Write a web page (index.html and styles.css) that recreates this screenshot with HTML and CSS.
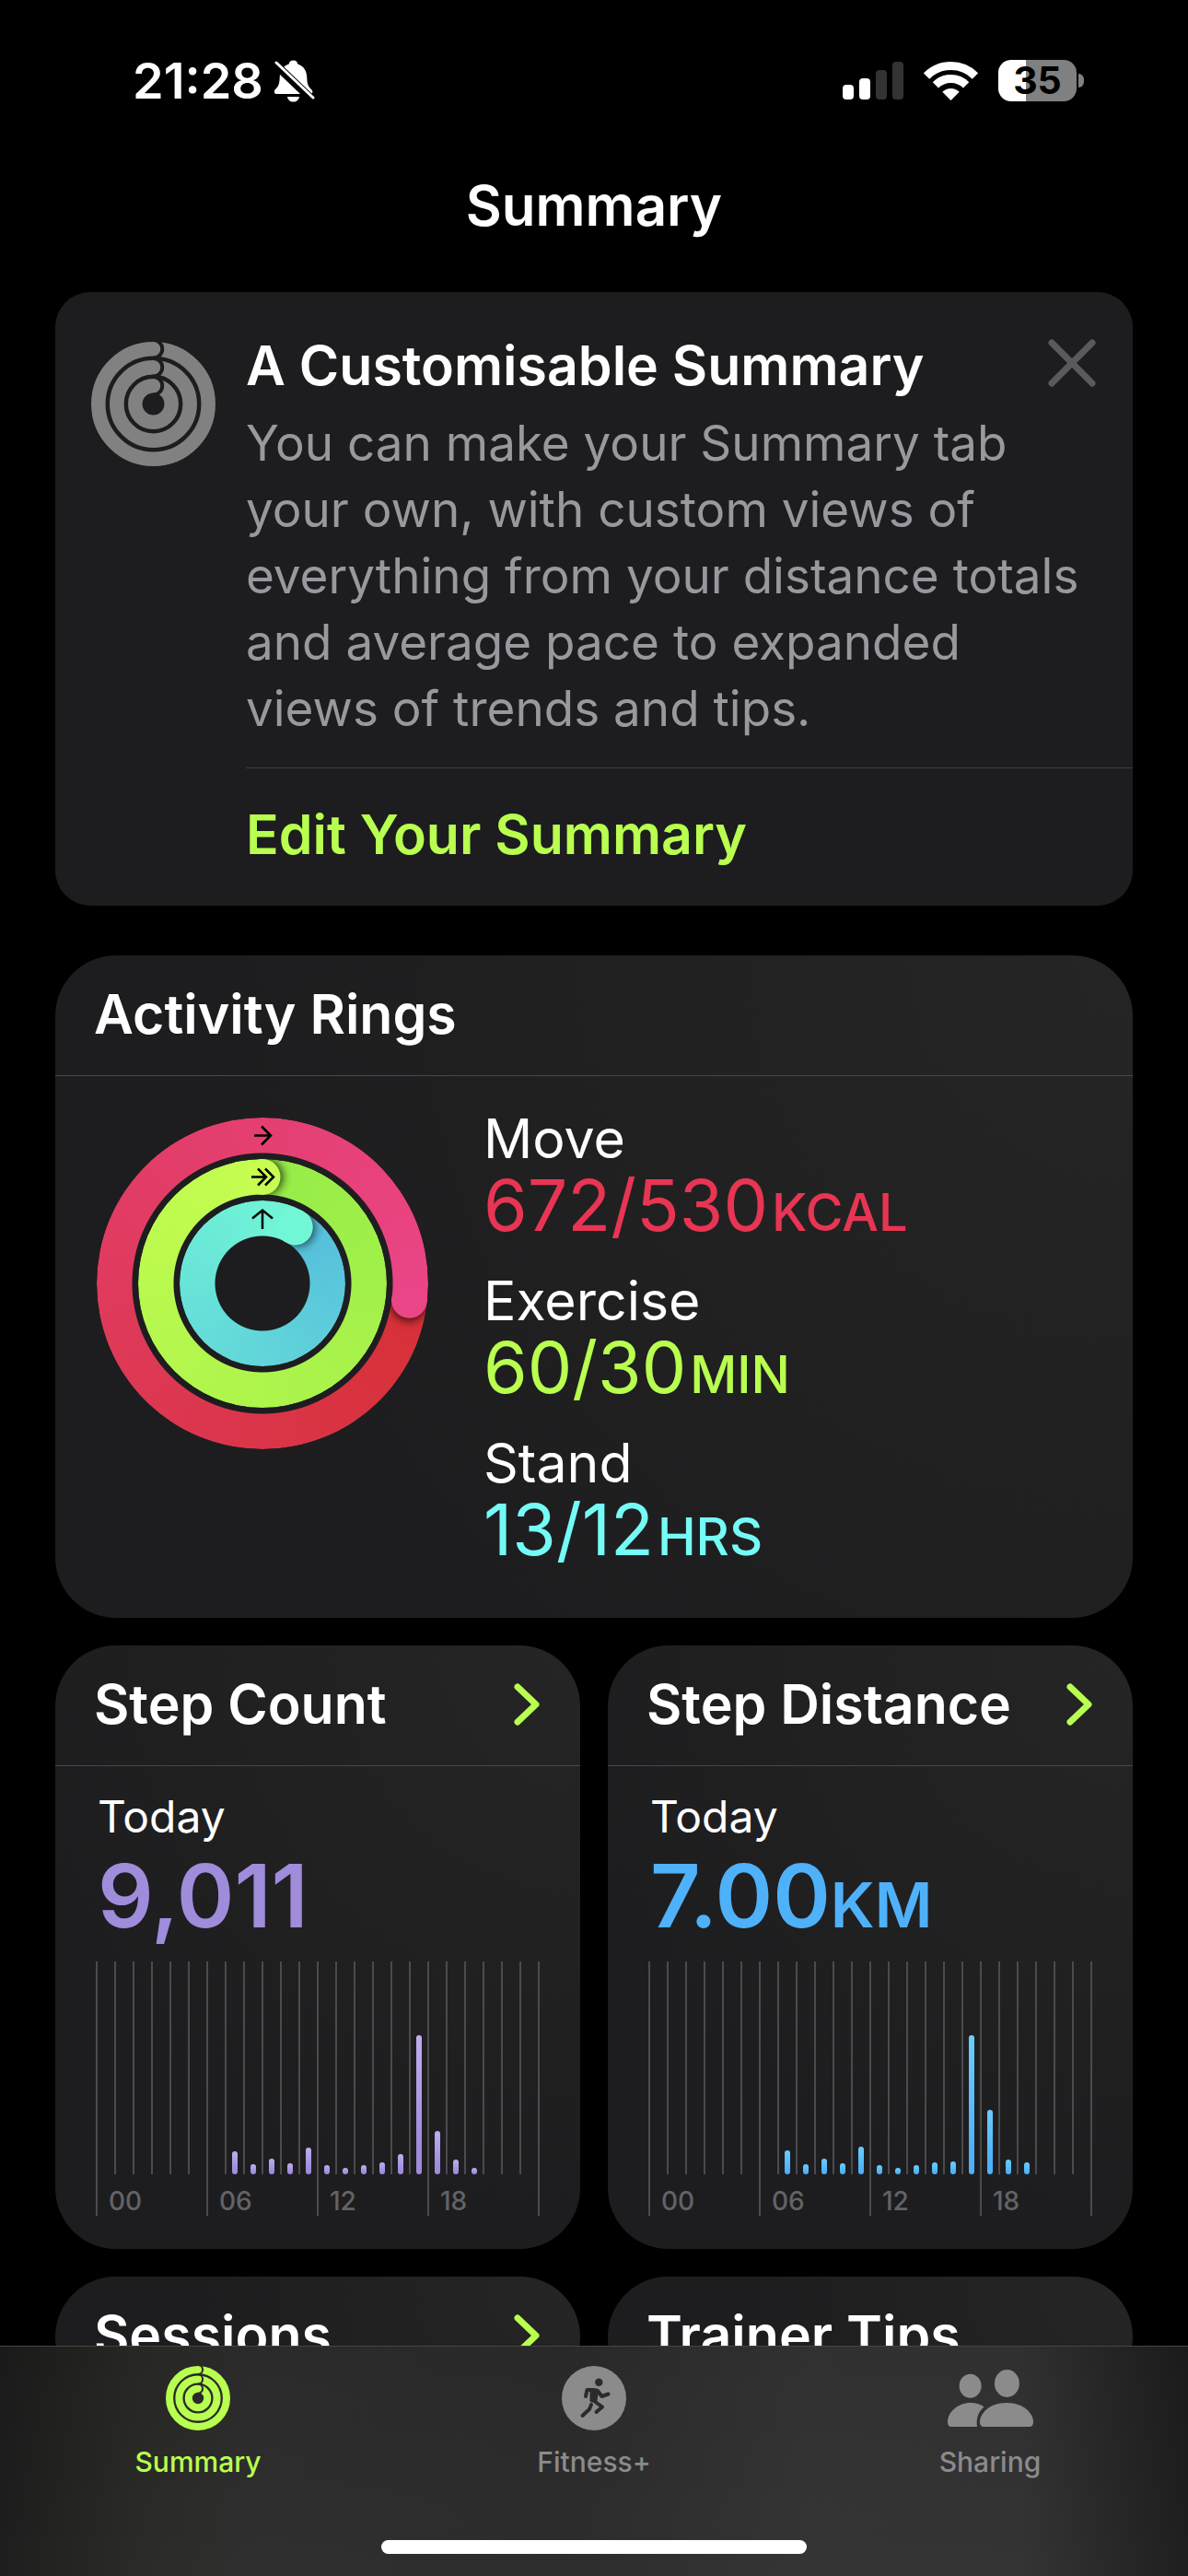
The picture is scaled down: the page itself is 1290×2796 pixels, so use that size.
FILE: index.html
```html
<!DOCTYPE html>
<html lang="en">
<head>
  <meta charset="UTF-8">
  <title>Summary</title>
  <meta name="viewport" content="width=device-width, initial-scale=1">
  <link rel="stylesheet" href="styles.css">
</head>
<body>
  <!-- shared icons -->
  <svg class="sprite" aria-hidden="true">
    <mask id="rings-cut" maskUnits="userSpaceOnUse" x="0" y="0" width="135" height="135">
      <rect width="135" height="135" fill="#fff"/>
      <g fill="none" stroke="#000" stroke-width="4">
        <path d="M67.5 -2a9.75 9.75 0 0 1 0 19.5"/>
        <path d="M67.5 18a9.75 9.75 0 0 1 0 19.5"/>
        <path d="M67.5 38a9.75 9.75 0 0 1 0 19.5"/>
      </g>
    </mask>
    <symbol id="icon-rings" viewBox="0 0 135 135">
      <g mask="url(#rings-cut)" fill="none" stroke="currentColor" stroke-width="15.5">
        <circle cx="67.5" cy="67.5" r="59.7"/>
        <circle cx="67.5" cy="67.5" r="39.7"/>
        <circle cx="67.5" cy="67.5" r="19.7"/>
      </g>
    </symbol>
    <symbol id="icon-chevron" viewBox="0 0 28 46">
      <path d="M4 4l20 19L4 42" fill="none" stroke="currentColor" stroke-width="7" stroke-linecap="round" stroke-linejoin="round"/>
    </symbol>
  </svg>

  <div class="status-bar">
    <div class="status-left">
      <span>21:28</span>
      <svg class="bell" viewBox="0 0 44 46">
        <path d="M20.500 0.500c2.500 0 4.500 1.500 4.800 4 6.500 2 9.700 7.500 10 14.500.2 7 1.200 9.500 4.700 13 2.500 2.500 1.500 5-1.500 5H2.500c-3 0-4-2.500-1.500-5 3.500-3.500 4.500-6 4.700-13 .3-7 3.500-12.500 10-14.500.3-2.500 2.300-4 4.800-4z" fill="#fff"/>
        <path d="M14 40h13c-.5 3.500-3 5.500-6.500 5.500S14.500 43.500 14 40z" fill="#fff"/>
        <path d="M-1 3l43 41" stroke="#000" stroke-width="9"/>
        <path d="M2 3l40 38" stroke="#fff" stroke-width="3" stroke-linecap="round"/>
      </svg>
    </div>
    <div class="status-right">
      <svg class="signal" viewBox="0 0 66 42">
        <rect x="0" y="25" width="12" height="16" rx="4" fill="#fff"/>
        <rect x="18" y="18" width="12" height="23" rx="4" fill="#fff"/>
        <rect x="36" y="9" width="12" height="32" rx="4" fill="#333"/>
        <rect x="54" y="0" width="12" height="41" rx="4" fill="#333"/>
      </svg>
      <svg class="wifi" viewBox="0 0 59 42">
        <path d="M3 15.500a37.500 37.500 0 0 1 53 0M12.900 25.400a23.500 23.500 0 0 1 33.200 0" fill="none" stroke="#fff" stroke-width="9"/>
        <path d="M20.300 32.800a13 13 0 0 1 18.400 0L29.500 42z" fill="#fff"/>
      </svg>
      <div class="battery">35</div>
    </div>
  </div>

  <main>
    <h1>Summary</h1>

    <section class="card tip">
      <svg class="tip-icon"><use href="#icon-rings"/></svg>
      <div class="tip-main">
        <div class="tip-text">
          <h2>A Customisable Summary</h2>
          <p>You can make your Summary tab your own, with custom views of everything from your distance totals and average pace to expanded views of trends and tips.</p>
        </div>
        <button class="edit" type="button">Edit Your Summary</button>
      </div>
      <button class="close" type="button" aria-label="Close">
        <svg viewBox="0 0 52 52"><path d="M4 4l44 44M48 4L4 48" stroke="currentColor" stroke-width="7" stroke-linecap="round"/></svg>
      </button>
    </section>

    <section class="card widget activity">
      <div class="widget-head"><h2>Activity Rings</h2></div>
      <div class="activity-body">
        <div class="rings">
          <div class="ring move"></div>
          <div class="ring exercise"></div>
          <div class="ring stand"></div>
          <svg viewBox="-180 -180 360 360">
            <defs>
              <filter id="blur" x="-50%" y="-50%" width="200%" height="200%"><feGaussianBlur stdDeviation="5"/></filter>
              <clipPath id="ahead"><rect x="0" y="-180" width="80" height="180"/></clipPath>
              <clipPath id="clip-move"><path clip-rule="evenodd" d="M-180 0a180 180 0 1 0 360 0a180 180 0 1 0-360 0zM-141 0a141 141 0 1 0 282 0a141 141 0 1 0-282 0z"/></clipPath>
              <clipPath id="clip-exercise"><path clip-rule="evenodd" d="M-135 0a135 135 0 1 0 270 0a135 135 0 1 0-270 0zM-96 0a96 96 0 1 0 192 0a96 96 0 1 0-192 0z"/></clipPath>
              <clipPath id="clip-stand"><path clip-rule="evenodd" d="M-90 0a90 90 0 1 0 180 0a90 90 0 1 0-180 0zM-51 0a51 51 0 1 0 102 0a51 51 0 1 0-102 0z"/></clipPath>
            </defs>
            <!-- ring tips: a shadow ahead of the tip, then the round end -->
            <g transform="rotate(96.500)" clip-path="url(#clip-move)">
              <g clip-path="url(#ahead)">
                <circle cx="3" cy="-160.500" r="19.500" filter="url(#blur)" opacity=".7"/>
              </g>
              <circle cx="0" cy="-160.500" r="19.500" fill="#ea4587"/>
            </g>
            <g clip-path="url(#clip-exercise)">
              <g clip-path="url(#ahead)">
                <circle cx="3" cy="-115.500" r="19.500" filter="url(#blur)" opacity=".7"/>
              </g>
              <circle cx="0" cy="-115.500" r="19.500" fill="#c6fd50"/>
            </g>
            <g transform="rotate(30)" clip-path="url(#clip-stand)">
              <g clip-path="url(#ahead)">
                <circle cx="3" cy="-70.500" r="19.500" filter="url(#blur)" opacity=".6"/>
              </g>
              <circle cx="0" cy="-70.500" r="19.500" fill="#72f7d6"/>
            </g>
            <g fill="none" stroke="#000" stroke-width="2.500">
              <path d="M-9-160.500H9M-1-170.500l10 10-10 10"/>
              <path d="M-12-115.500H3M-5-124.500l9 9-9 9M3-124.500l9 9-9 9"/>
              <path d="M0-59V-79M-11-70.500L0-79.500l11 9"/>
            </g>
          </svg>
        </div>
        <dl class="metrics">
          <div>
            <dt>Move</dt>
            <dd class="move-text">672/530<small>KCAL</small></dd>
          </div>
          <div>
            <dt>Exercise</dt>
            <dd class="exercise-text">60/30<small>MIN</small></dd>
          </div>
          <div>
            <dt>Stand</dt>
            <dd class="stand-text">13/12<small>HRS</small></dd>
          </div>
        </dl>
      </div>
    </section>

    <div class="grid">
      <section class="card widget steps">
        <a class="widget-head" href="#steps">
          <h2>Step Count</h2>
          <svg class="chevron"><use href="#icon-chevron"/></svg>
        </a>
        <div class="widget-body">
          <p class="period">Today</p>
          <p class="value">9,011</p>
          <div class="chart" id="steps-chart"></div>
        </div>
      </section>

      <section class="card widget distance">
        <a class="widget-head" href="#distance">
          <h2>Step Distance</h2>
          <svg class="chevron"><use href="#icon-chevron"/></svg>
        </a>
        <div class="widget-body">
          <p class="period">Today</p>
          <p class="value">7.00<small>KM</small></p>
          <div class="chart" id="distance-chart"></div>
        </div>
      </section>

      <section class="card widget">
        <a class="widget-head" href="#sessions">
          <h2>Sessions</h2>
          <svg class="chevron"><use href="#icon-chevron"/></svg>
        </a>
      </section>

      <section class="card widget">
        <div class="widget-head"><h2>Trainer Tips</h2></div>
      </section>
    </div>
  </main>

  <nav class="tab-bar">
    <div class="tabs">
      <a class="tab active" href="#summary">
        <svg viewBox="0 0 135 135"><use href="#icon-rings"/></svg>
        <span>Summary</span>
      </a>
      <a class="tab" href="#fitness">
        <svg viewBox="0 0 70 70">
          <circle cx="35" cy="35" r="35" fill="currentColor"/>
          <g fill="none" stroke="#2b2b2c" stroke-width="4" stroke-linecap="round" stroke-linejoin="round">
            <circle cx="40.300" cy="17.700" r="4.200" fill="#2b2b2c" stroke="none"/>
            <path d="M35 26L27.500 26 26 33"/>
            <path d="M39 27l4.500 6 7-2.500"/>
            <path d="M32.500 26.500h5.500l-1.500 11h-4z" fill="#2b2b2c"/>
            <path d="M35 38l9 6.500-6.500 5.500"/>
            <path d="M32 42l-2 5-7.500 7"/>
          </g>
        </svg>
        <span>Fitness+</span>
      </a>
      <a class="tab" href="#sharing">
        <svg class="people" viewBox="0 0 93 70" fill="currentColor">
          <ellipse cx="24.600" cy="21.700" rx="12" ry="13"/>
          <ellipse cx="64.400" cy="19" rx="13.500" ry="15"/>
          <path d="M4 66Q0 66 0 61C0 50 11 40 25 40c6 0 11 1.500 14.500 4.500C33 50 30.500 58 32 66z"/>
          <path d="M39.500 66Q35 66 35 61C35 51 46 40 64 40s29 11 29 21q0 5-4.500 5z"/>
        </svg>
        <span>Sharing</span>
      </a>
    </div>
    <div class="home-indicator"></div>
  </nav>

  <script>
    // bar heights in px, by slot of the day
    const hourly = {
      'steps-chart': {7: 25, 8: 11, 9: 17, 10: 12, 11: 29, 12: 10, 13: 7, 14: 10, 15: 13, 16: 22, 17: 151, 18: 47, 19: 16, 20: 7},
      'distance-chart': {7: 26, 8: 11, 9: 17, 10: 12, 11: 30, 12: 10, 13: 7, 14: 10, 15: 13, 16: 14, 17: 151, 18: 70, 19: 16, 20: 13},
    };

    function drawChart(id, data) {
      let slots = '';
      for (let h = 0; h < 24; h++) {
        slots += data[h] ? `<i><b style="height: ${data[h]}px"></b></i>` : '<i></i>';
      }
      document.getElementById(id).innerHTML = `
        <div class="plot">${slots}</div>
        <div class="hours"><span>00</span><span>06</span><span>12</span><span>18</span></div>
      `;
    }

    for (const id in hourly) drawChart(id, hourly[id]);
  </script>
</body>
</html>
```

FILE: styles.css
```css
* {
  box-sizing: border-box;
}

body {
  margin: 0;
  height: 100vh;
  display: flex;
  flex-direction: column;
  background-color: #000;
  color: #fff;
  font-family: Inter, "Liberation Sans", sans-serif;
}

h1, h2, p, dl, dd {
  margin: 0;
}

h1, h2 {
  font-size: 60px;
  line-height: 76px;
  font-weight: 600;
}

a {
  color: inherit;
  text-decoration: none;
}

button {
  border: none;
  background: none;
  padding: 0;
  font-family: inherit;
  cursor: pointer;
}

svg {
  display: block;
}

small {
  line-height: 1;
}

.sprite {
  position: absolute;
  width: 0;
  height: 0;
}

/* status bar */
.status-bar {
  display: flex;
  justify-content: space-between;
  padding: 55px 113px 0 144px;
  height: 120px;
  flex-shrink: 0;
  font-size: 54px;
  line-height: 65px;
  font-weight: 600;
}

.status-left, .status-right {
  display: flex;
  align-items: center;
}

.status-left {
  gap: 12px;
}

.status-right {
  gap: 22px;
}

.bell {
  width: 44px;
  height: 46px;
}

.signal {
  width: 66px;
  height: 42px;
}

.wifi {
  width: 59px;
  height: 42px;
}

.battery {
  position: relative;
  width: 85px;
  height: 45px;
  margin-right: 8px;
  border-radius: 14px;
  background: linear-gradient(90deg, #fff 35%, #808080 35%);
  color: #000;
  font-size: 41px;
  line-height: 45px;
  font-weight: 700;
  text-align: center;
}

.battery::after {
  content: "";
  position: absolute;
  left: 87px;
  top: 15px;
  width: 6px;
  height: 15px;
  border-radius: 0 6px 6px 0;
  background-color: #808080;
}

/* content */
main {
  flex: 1;
  min-height: 0;
  overflow: auto;
  scrollbar-width: none;
  padding: 65px 60px 0;
}

h1 {
  text-align: center;
  margin-bottom: 56px;
}

.card {
  background-color: #1d1d1f;
  overflow: hidden;
}

.card h2, .edit {
  font-size: 59px;
}

.tip {
  position: relative;
  display: flex;
  padding-left: 39px;
  border-radius: 38px;
}

.tip-icon {
  width: 135px;
  height: 135px;
  margin: 54px 33px 0 0;
  color: #818181;
  flex-shrink: 0;
}

.tip-main {
  flex: 1;
}

.tip-text {
  padding: 42px 40px 28px 0;
  border-bottom: 1px solid #3d3d40;
}

.tip-text p {
  margin-top: 10px;
  font-size: 53px;
  line-height: 72px;
  color: #98989f;
}

.edit {
  display: block;
  padding: 34px 0 39px;
  line-height: 76px;
  font-weight: 600;
  color: #b9ff4f;
}

.close {
  position: absolute;
  top: 51px;
  right: 40px;
  color: #5a5a5e;
}

.close svg {
  width: 52px;
  height: 52px;
}

.widget {
  border-radius: 66px;
  background: radial-gradient(circle at 100% 0, #252525, #1d1d1f 75%);
}

.widget-head {
  display: flex;
  align-items: center;
  justify-content: space-between;
  padding: 26px 44px 28px 42px;
  border-bottom: 1px solid #48484a;
}

.chevron {
  width: 28px;
  height: 46px;
  color: #b9ff4f;
}

/* activity rings */
.activity {
  margin-top: 54px;
}

.activity-body {
  display: flex;
  gap: 60px;
  padding: 34px 45px 58px;
}

.rings {
  display: grid;
  place-items: center;
  width: 360px;
  height: 360px;
  margin-top: 11px;
}

.rings > * {
  grid-area: 1 / 1;
}

.rings svg {
  width: 360px;
  height: 360px;
  z-index: 1;
}

.ring {
  border-radius: 50%;
  -webkit-mask: radial-gradient(closest-side, transparent calc(100% - 39px), #000 calc(100% - 38px));
  mask: radial-gradient(closest-side, transparent calc(100% - 39px), #000 calc(100% - 38px));
}

.move {
  width: 360px;
  height: 360px;
  background: conic-gradient(from 97deg, #d63036, #ea4587);
}

.exercise {
  width: 270px;
  height: 270px;
  background: conic-gradient(from 1deg, #96ec48, #c6fd50);
}

.stand {
  width: 180px;
  height: 180px;
  background: conic-gradient(from 31deg, #55bddc, #72f7d6);
}

.metrics {
  display: flex;
  flex-direction: column;
  gap: 32px;
}

.metrics dt {
  font-size: 59px;
  line-height: 68px;
}

.metrics dd {
  font-size: 77px;
  line-height: 76px;
}

.metrics small {
  font-size: 56px;
  font-weight: 500;
  margin-left: 4px;
}

.move-text {
  color: #e83553;
}

.exercise-text {
  color: #b9ff4f;
}

.stand-text {
  color: #75fbf5;
}

/* small widgets */
.grid {
  display: grid;
  grid-template-columns: 1fr 1fr;
  gap: 30px;
  margin-top: 30px;
}

.widget-body {
  padding: 25px 44px 36px;
}

.period {
  padding-left: 2px;
  font-size: 48px;
  line-height: 60px;
}

.value {
  margin-top: 6px;
  padding-left: 2px;
  font-size: 95px;
  line-height: 100px;
  font-weight: 600;
  color: var(--tint);
}

.value small {
  font-size: 68px;
}

.steps {
  --tint: #9f8cdb;
  --tint-light: #bfaeee;
}

.distance {
  --tint: #4fb1fa;
  --tint-light: #6bcdfb;
}

.chart {
  margin-top: 21px;
  border-right: 2px solid #4b4b4d;
}

.plot {
  display: grid;
  grid-template-columns: repeat(24, 1fr);
  height: 231px;
}

.plot i {
  display: flex;
  align-items: flex-end;
  justify-content: center;
  border-left: 2px solid #4b4b4d;
}

.plot b {
  width: 6px;
  border-radius: 3px;
  background: linear-gradient(var(--tint-light), var(--tint) 80%);
}

.hours {
  display: grid;
  grid-template-columns: repeat(4, 1fr);
}

.hours span {
  padding: 13px 0 0 12px;
  border-left: 2px solid #4b4b4d;
  font-size: 28px;
  line-height: 32px;
  font-weight: 500;
  color: #636366;
}

/* tab bar */
.tab-bar {
  position: fixed;
  left: 0;
  right: 0;
  bottom: 0;
  height: 250px;
  display: flex;
  flex-direction: column;
  justify-content: space-between;
  align-items: center;
  padding: 21px 0 24px;
  border-top: 1px solid #454545;
  background:
    linear-gradient(rgba(255, 255, 255, 0), rgba(255, 255, 255, 0.02)),
    linear-gradient(90deg, #1a1a1a, #272823 12%, #2b2b2c 22%, #29292a 48%, #313132 68%, #303031 86%, #1b1b1b);
}

.tabs {
  width: 100%;
  display: grid;
  grid-template-columns: repeat(3, 1fr);
}

.tab {
  display: flex;
  flex-direction: column;
  align-items: center;
  gap: 15px;
  font-size: 30px;
  line-height: 38px;
  font-weight: 500;
  color: #8b8b8b;
}

.tab svg {
  width: 70px;
  height: 70px;
}

.tab .people {
  width: 93px;
}

.active {
  color: #b9ff4f;
}

.home-indicator {
  width: 462px;
  height: 15px;
  border-radius: 8px;
  background-color: #fff;
}
```
